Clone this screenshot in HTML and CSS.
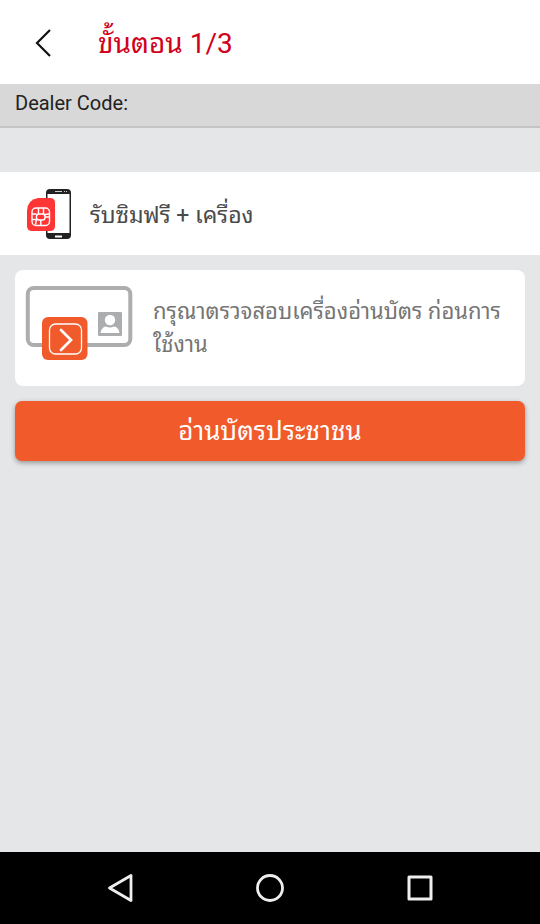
FILE: index.html
```html
<!DOCTYPE html>
<html lang="th">
<head>
<meta charset="utf-8">
<meta name="viewport" content="width=device-width, initial-scale=1">
<title>ขั้นตอน 1/3</title>
<link rel="stylesheet" href="styles.css">
</head>
<body>
<header class="topbar">
  <button class="icon-button back" type="button" aria-label="ย้อนกลับ">
    <svg width="24" height="32" viewBox="0 0 24 32"><path d="M20 2 7 15l13 13" fill="none" stroke="#111" stroke-width="2.200"/></svg>
  </button>
  <h1 class="title">ขั้นตอน 1/3</h1>
</header>
<p class="dealer">Dealer Code:</p>
<main class="content">
  <section class="offer">
    <svg class="offer-icon" width="46" height="52" viewBox="0 0 46 52">
      <rect x="20" y="1" width="25" height="50" rx="4" fill="#222"/>
      <rect x="21.500" y="6" width="22" height="39" fill="#fff"/>
      <path d="M29 3.500h7m2 0h1m1 0h1" stroke="#ccc"/>
      <path d="M29 48.500h7" stroke="#fff" stroke-width="2"/>
      <path d="M12 10h12q5 0 5 5v23q0 5-5 5H6q-5 0-5-5V23Q1 12 12 10z" fill="#ff3435"/>
      <g fill="none" stroke="#fff" stroke-width="1.400"><rect x="6" y="20" width="17.500" height="17.500" rx="4"/><path d="M6 26h4.500M6 31.500h4.500M19 29h4.500M12.500 20v6M17.500 20v6M14.800 32v5.500M18.500 26.500l5-.500M10.500 31.500l-1 5"/><rect x="10.500" y="26" width="8.500" height="6" rx="2.500"/></g>
    </svg>
    <h2 class="offer-title">รับซิมฟรี + เครื่อง</h2>
  </section>
  <section class="notice">
    <svg class="card-icon" width="108" height="76" viewBox="0 0 108 76">
      <rect x="2.800" y="3" width="102.500" height="57" rx="6" fill="#fff" stroke="#abadaf" stroke-width="4"/>
      <rect x="73" y="27" width="24" height="24" rx="1" fill="#abadaf"/>
      <circle cx="85" cy="35" r="5.200" fill="#fff"/><path d="M75.500 48q1-6 5.500-6.500 4 2 8 0 4.500.500 5.500 6.500z" fill="#fff"/>
      <rect x="17" y="32" width="45.500" height="43" rx="6" fill="#f15a2b"/>
      <rect x="24.500" y="39" width="32" height="30" rx="6" fill="none" stroke="#fff" stroke-width="1.300"/>
      <path d="m36 45 10 10-10 10" fill="none" stroke="#fff" stroke-width="2.700" stroke-linecap="round"/>
    </svg>
    <p class="notice-text">กรุณาตรวจสอบเครื่องอ่านบัตร ก่อนการใช้งาน</p>
  </section>
  <button class="primary" type="button">อ่านบัตรประชาชน</button>
</main>
<nav class="navbar" aria-label="ระบบ">
  <button class="icon-button" type="button" aria-label="Back"><svg width="30" height="32" viewBox="0 0 30 32"><path d="M26 3.500v25L4.500 16z" fill="none" stroke="#eee" stroke-width="2.800" stroke-linejoin="round"/></svg></button>
  <button class="icon-button" type="button" aria-label="Home"><svg width="30" height="32" viewBox="0 0 30 32"><circle cx="15" cy="16" r="12.500" fill="none" stroke="#eee" stroke-width="2.800"/></svg></button>
  <button class="icon-button" type="button" aria-label="Recent"><svg width="30" height="32" viewBox="0 0 30 32"><rect x="4" y="5" width="22" height="22" fill="none" stroke="#eee" stroke-width="3" stroke-linejoin="round"/></svg></button>
</nav>
</body>
</html>
```
FILE: styles.css
```css
* { box-sizing: border-box; }
body { margin: 0; min-height: 100vh; display: flex; flex-direction: column; background: #e5e6e8; font-family: Roboto, "Noto Sans Thai Looped", "Droid Sans Thai", Loma, Garuda, Waree, "Noto Sans", sans-serif; }
h1, h2, p { margin: 0; font-weight: 400; }
svg { display: block; flex: none; }
.icon-button { padding: 0; border: 0; background: none; }
.topbar { display: flex; align-items: center; gap: 44px; min-height: 84px; padding: 4px 30px 0; background: #fff; }
.title { color: #d0021b; font-size: 28px; line-height: 40px; }
.dealer { min-height: 44px; padding: 0 15px; border-bottom: 2px solid #c4c4c4; background: #d8d8d8; color: #222; font-size: 20px; line-height: 38px; }
.content { flex: 1; padding-top: 44px; }
.offer { display: flex; align-items: center; gap: 18px; min-height: 83px; padding: 0 26px; background: #fff; }
.offer-title { padding-top: 4px; color: #4a4a4a; font-size: 23px; line-height: 36px; }
.notice { display: flex; gap: 20px; margin: 15px; min-height: 116px; padding: 15px 20px 15px 10px; border-radius: 8px; background: #fff; }
.notice-text { padding-top: 10px; color: #757575; font-size: 22px; line-height: 33px; }
.primary { display: block; width: calc(100% - 30px); min-height: 60px; margin: 0 15px; padding: 0 0 6px; border: 0; border-radius: 7px; background: #f15a2b; box-shadow: 0 2px 5px rgb(0 0 0 / 35%); color: #fff; font: inherit; font-size: 26px; }
.navbar { display: flex; justify-content: center; gap: 120px; align-items: center; min-height: 72px; background: #000; }
```
